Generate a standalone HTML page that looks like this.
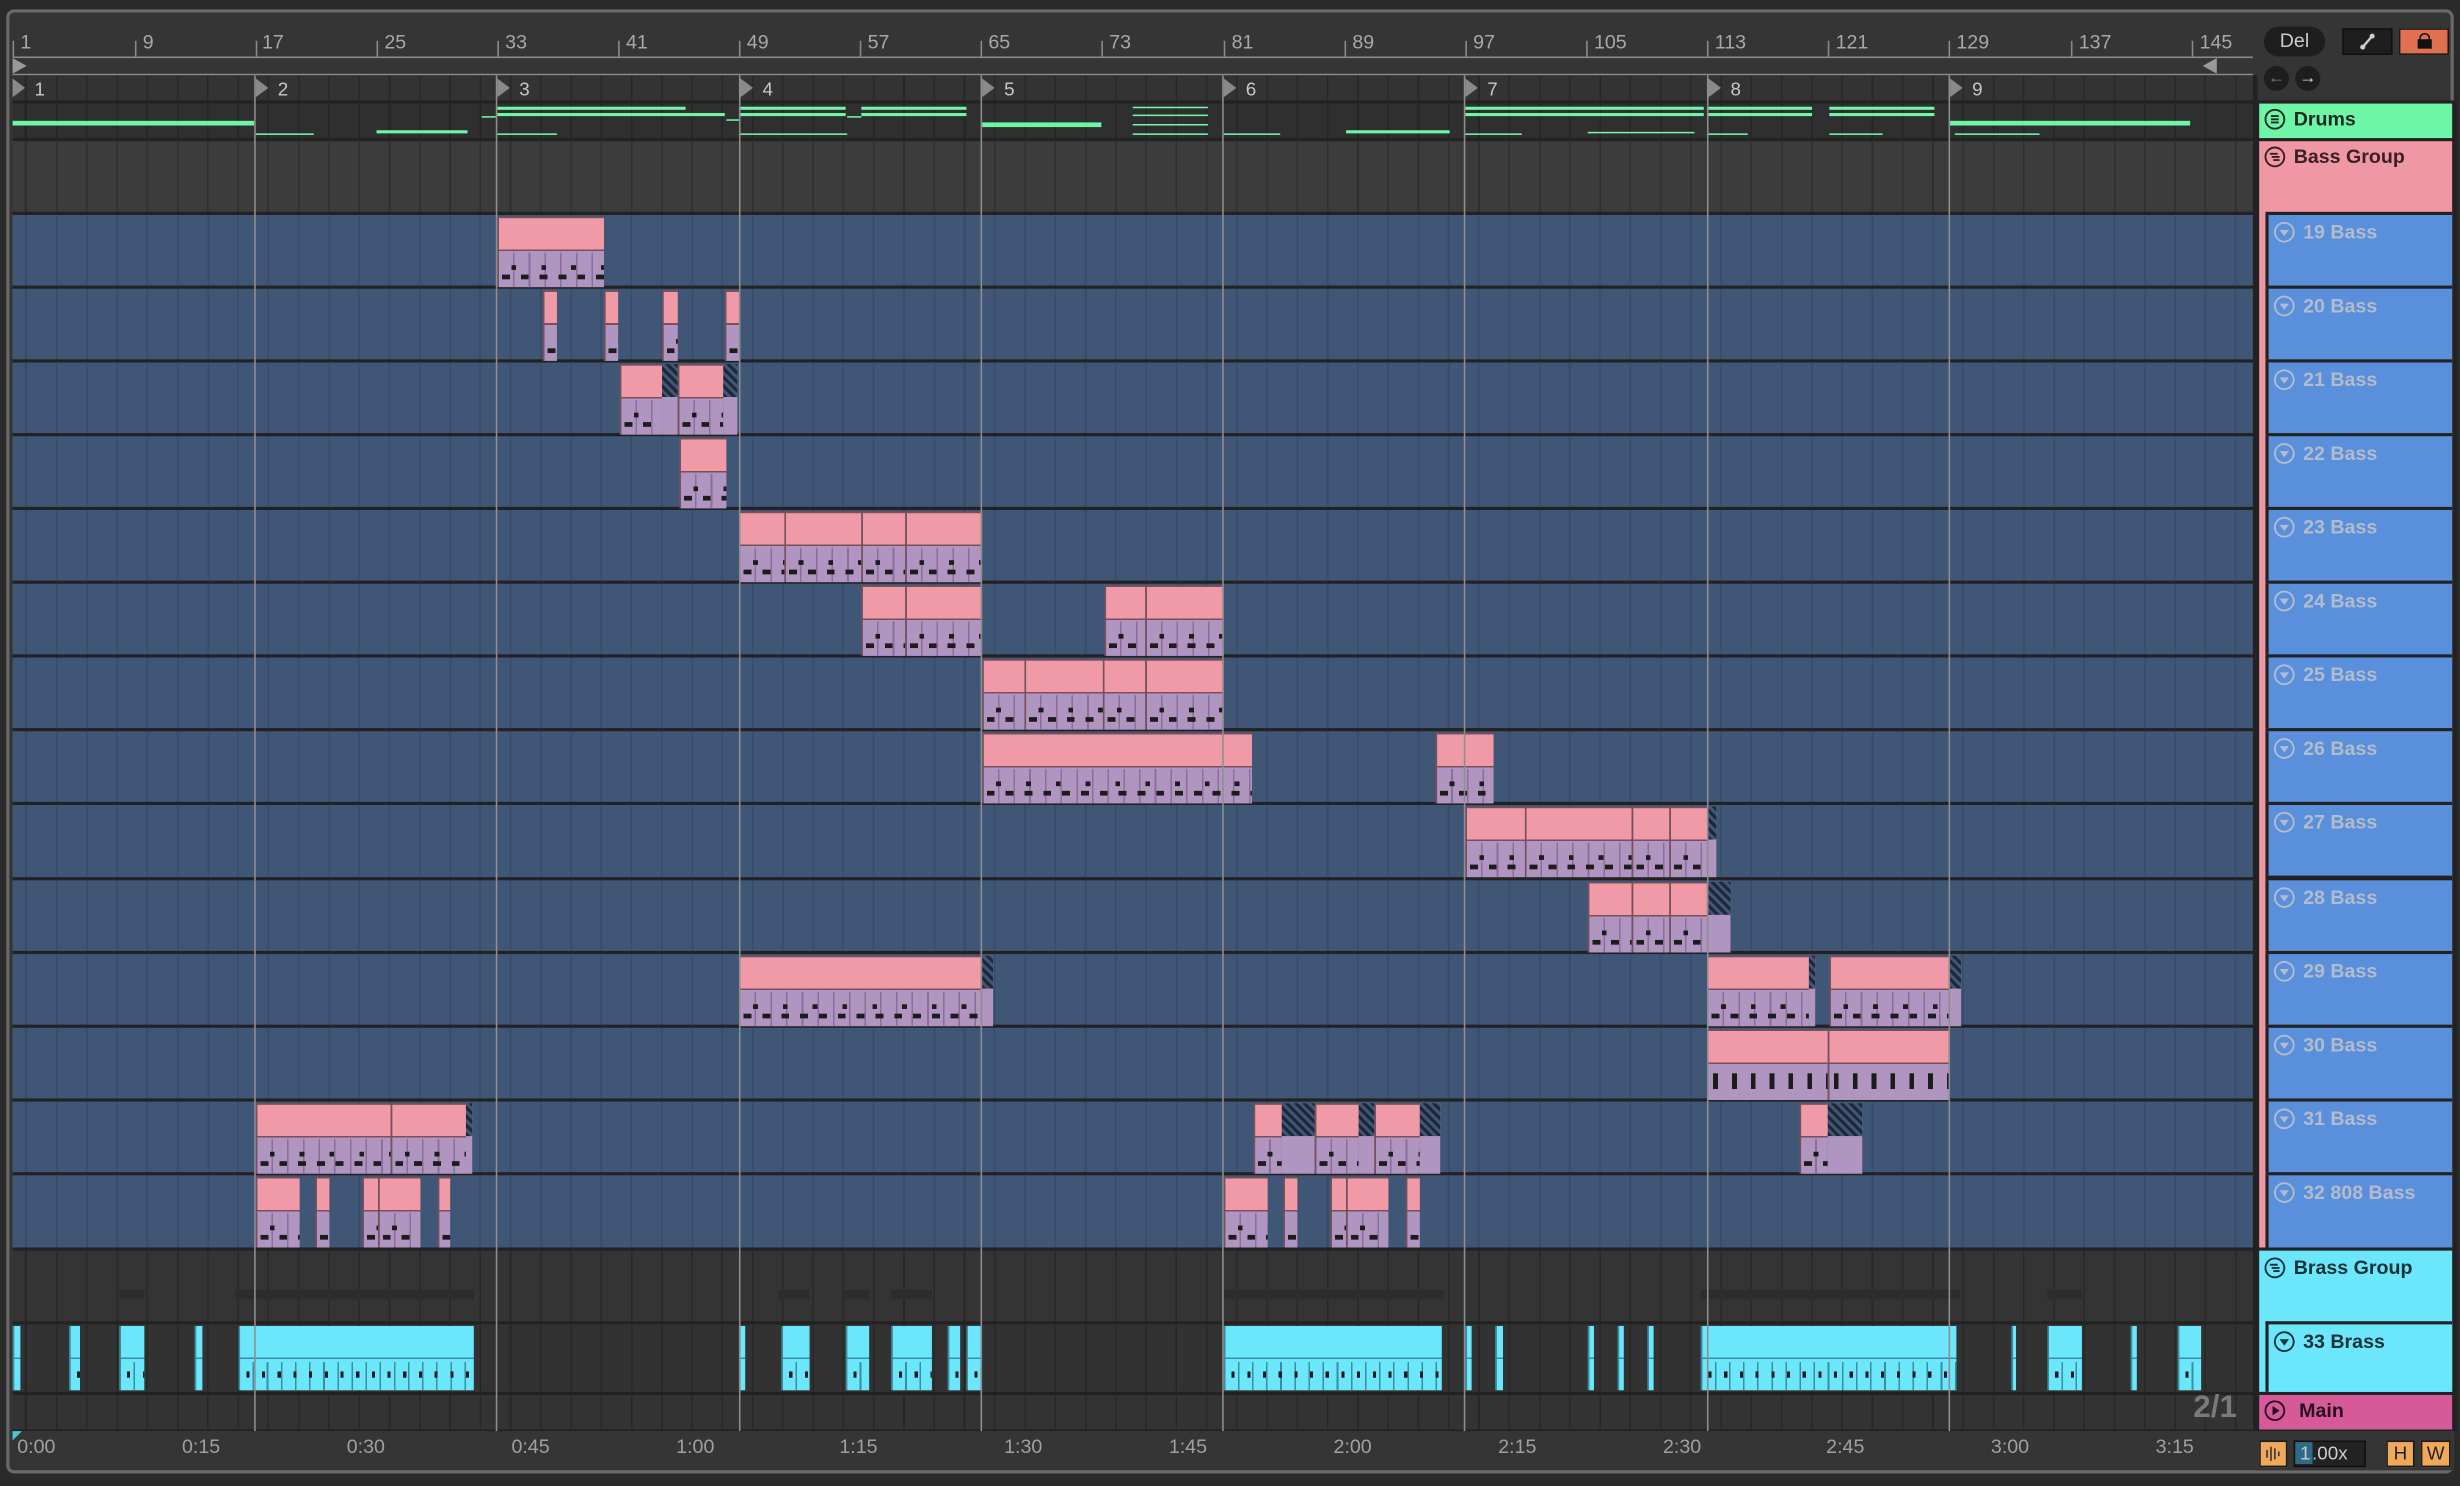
<!DOCTYPE html>
<html><head><meta charset="utf-8">
<style>
html,body{margin:0;padding:0;background:#2a2a2a;overflow:hidden;width:2460px;height:1486px}
#s{position:absolute;left:0;top:0;width:1568px;height:947px;transform:scale(1.56888,1.56917);transform-origin:0 0;font-family:"Liberation Sans",sans-serif}
.a{position:absolute}
.frame{left:4px;top:6px;width:1560px;height:933px;border:2px solid #6a6a6a;border-radius:5px;background:#353535;box-sizing:border-box}
.rl{position:absolute;top:20px;color:#a8a8a8;font-size:12.5px}
.tk{position:absolute;width:1px;background:#8a8a8a}
.grid{background-image:repeating-linear-gradient(90deg,rgba(0,0,0,.22) 0 1px,transparent 1px 19.29px);background-position:8.3px 0}
.row{position:absolute;left:8px;width:1428px}
.blue{background-color:#3f5677}
.sep{position:absolute;left:8px;width:1430px;height:2px;background:#222}
.scl{position:absolute;top:48px;width:1px;height:864px;background:#8e8e8e}
.c{position:absolute;height:45px;box-sizing:border-box;border-left:1px solid #7a4f5b;border-top:1px solid #7a4f5b;
background:
repeating-linear-gradient(90deg,transparent 0 2px,#1c1c1c 2px 7px,transparent 7px 12px) 0 36px/100% 3px no-repeat,
repeating-linear-gradient(90deg,transparent 0 8px,#1c1c1c 8px 11px,transparent 11px 19px) 0 30px/100% 3px no-repeat,
repeating-linear-gradient(90deg,transparent 0 9px,#8a6f9a 9px 10px) 0 22px/100% 23px no-repeat,
linear-gradient(#ef9aa6 0 20px,#7a4f5b 20px 21px,#b095c1 21px)}
.h{position:absolute;height:45px;box-sizing:border-box;
background:repeating-linear-gradient(45deg,#1d2736 0 2px,#3f5677 2px 4px) 0 0/100% 21px no-repeat,#b095c1}
.b{position:absolute;top:845px;height:41px;box-sizing:border-box;border-left:1px solid #3a8ea0;
background:
repeating-linear-gradient(90deg,transparent 0 4px,#1c1c1c 4px 6px,transparent 6px 10px) 0 29px/100% 4px no-repeat,
repeating-linear-gradient(90deg,transparent 0 8px,#3a8ea0 8px 9px) 0 23px/100% 18px no-repeat,
linear-gradient(#6be6fb 0 20px,#3a8ea0 20px 21px,#6be6fb 21px)}
.g{position:absolute;height:2px;background:#6ef5a5}
.sc{position:absolute;top:50px;color:#c8c8c8;font-size:12px}
.tri{position:absolute;top:50px;width:0;height:0;border-top:6px solid transparent;border-bottom:6px solid transparent;border-left:8px solid #8a8a8a}
.hd{position:absolute;box-sizing:border-box;font-weight:bold;font-size:12.5px}
svg.i{width:14px;height:14px;vertical-align:-3px;margin-right:5px}
.bh{position:absolute;left:1444px;width:119px;height:45px;background:#5a8fdc;border-left:2px solid #222;box-sizing:border-box;color:#b3bccb;padding:4px 0 0 3px;font-weight:bold;font-size:12.5px}
.tl{position:absolute;top:915px;color:#a0a0a0;font-size:12.5px}
</style></head><body><div id="s">
<div class="a frame"></div>
<div class="a" style="left:8px;top:36px;width:1428px;height:1px;background:#8a8a8a"></div>
<div class="a" style="left:8px;top:47px;width:1428px;height:1px;background:#8a8a8a"></div>
<div class="a" style="left:8px;top:37px;width:0;height:0;border-top:5px solid transparent;border-bottom:5px solid transparent;border-left:9px solid #999"></div>
<div class="a" style="left:1404px;top:37px;width:0;height:0;border-top:5px solid transparent;border-bottom:5px solid transparent;border-right:9px solid #999"></div>
<div class="rl" style="left:13px">1</div><div class="tk" style="left:8px;top:26px;height:10px"></div>
<div class="rl" style="left:91px">9</div><div class="tk" style="left:86px;top:26px;height:10px"></div>
<div class="rl" style="left:167px">17</div><div class="tk" style="left:163px;top:26px;height:10px"></div>
<div class="rl" style="left:245px">25</div><div class="tk" style="left:240px;top:26px;height:10px"></div>
<div class="rl" style="left:322px">33</div><div class="tk" style="left:317px;top:26px;height:10px"></div>
<div class="rl" style="left:399px">41</div><div class="tk" style="left:394px;top:26px;height:10px"></div>
<div class="rl" style="left:476px">49</div><div class="tk" style="left:471px;top:26px;height:10px"></div>
<div class="rl" style="left:553px">57</div><div class="tk" style="left:548px;top:26px;height:10px"></div>
<div class="rl" style="left:630px">65</div><div class="tk" style="left:625px;top:26px;height:10px"></div>
<div class="rl" style="left:707px">73</div><div class="tk" style="left:702px;top:26px;height:10px"></div>
<div class="rl" style="left:785px">81</div><div class="tk" style="left:780px;top:26px;height:10px"></div>
<div class="rl" style="left:862px">89</div><div class="tk" style="left:857px;top:26px;height:10px"></div>
<div class="rl" style="left:939px">97</div><div class="tk" style="left:934px;top:26px;height:10px"></div>
<div class="rl" style="left:1016px">105</div><div class="tk" style="left:1011px;top:26px;height:10px"></div>
<div class="rl" style="left:1093px">113</div><div class="tk" style="left:1088px;top:26px;height:10px"></div>
<div class="rl" style="left:1170px">121</div><div class="tk" style="left:1165px;top:26px;height:10px"></div>
<div class="rl" style="left:1247px">129</div><div class="tk" style="left:1242px;top:26px;height:10px"></div>
<div class="rl" style="left:1325px">137</div><div class="tk" style="left:1320px;top:26px;height:10px"></div>
<div class="rl" style="left:1402px">145</div><div class="tk" style="left:1397px;top:26px;height:10px"></div>

<div class="row grid" style="top:48px;height:16px;background-color:#333"></div>
<div class="sep" style="top:64px"></div>
<div class="row grid" style="top:66px;height:22px;background-color:#2f2f2f"></div>
<div class="sep" style="top:88px"></div>
<div class="row grid" style="top:90px;height:45px;background-color:#3c3c3c"></div>
<div class="row grid blue" style="top:137px;height:658px;background-image:repeating-linear-gradient(90deg,rgba(0,0,0,.12) 0 1px,transparent 1px 19.29px)"></div>
<div class="sep" style="top:135px"></div><div class="sep" style="top:182px"></div><div class="sep" style="top:229px"></div><div class="sep" style="top:276px"></div><div class="sep" style="top:323px"></div><div class="sep" style="top:370px"></div><div class="sep" style="top:417px"></div><div class="sep" style="top:464px"></div><div class="sep" style="top:511px"></div><div class="sep" style="top:559px"></div><div class="sep" style="top:606px"></div><div class="sep" style="top:653px"></div><div class="sep" style="top:700px"></div><div class="sep" style="top:747px"></div>
<div class="sep" style="top:795px"></div>
<div class="row grid" style="top:797px;height:45px;background-color:#343434"></div>
<div class="sep" style="top:842px"></div>
<div class="row grid" style="top:844px;height:43px;background-color:#323232"></div>
<div class="sep" style="top:887px"></div>
<div class="row grid" style="top:889px;height:22px;background-color:#333"></div>
<div class="sep" style="top:911px;height:1px"></div>
<div class="a" style="left:1436px;top:48px;width:3px;height:864px;background:#222"></div>
<div class="a" style="left:150px;top:822px;width:152px;height:6px;background:#2c2c2c"></div>
<div class="a" style="left:780px;top:822px;width:140px;height:6px;background:#2c2c2c"></div>
<div class="a" style="left:1084px;top:822px;width:165px;height:6px;background:#2c2c2c"></div>
<div class="a" style="left:496px;top:822px;width:20px;height:6px;background:#2c2c2c"></div>
<div class="a" style="left:538px;top:822px;width:16px;height:6px;background:#2c2c2c"></div>
<div class="a" style="left:568px;top:822px;width:26px;height:6px;background:#2c2c2c"></div>
<div class="a" style="left:76px;top:822px;width:16px;height:6px;background:#2c2c2c"></div>
<div class="a" style="left:1305px;top:822px;width:22px;height:6px;background:#2c2c2c"></div>

<div class="g" style="left:8px;top:77px;width:154px;height:3px"></div>
<div class="g" style="left:163px;top:85px;width:37px;height:1px"></div>
<div class="g" style="left:240px;top:83px;width:58px"></div>
<div class="g" style="left:307px;top:74px;width:9px;height:1px"></div>
<div class="g" style="left:317px;top:68px;width:120px"></div>
<div class="g" style="left:317px;top:72px;width:145px"></div>
<div class="g" style="left:317px;top:85px;width:38px;height:1px"></div>
<div class="g" style="left:463px;top:76px;width:8px;height:1px"></div>
<div class="g" style="left:471px;top:68px;width:68px"></div>
<div class="g" style="left:471px;top:72px;width:68px"></div>
<div class="g" style="left:471px;top:85px;width:69px;height:1px"></div>
<div class="g" style="left:540px;top:74px;width:9px;height:1px"></div>
<div class="g" style="left:549px;top:68px;width:67px"></div>
<div class="g" style="left:549px;top:72px;width:67px"></div>
<div class="g" style="left:626px;top:78px;width:76px;height:3px"></div>
<div class="g" style="left:722px;top:68px;width:48px;height:1px"></div>
<div class="g" style="left:722px;top:73px;width:48px;height:1px"></div>
<div class="g" style="left:722px;top:79px;width:48px;height:1px"></div>
<div class="g" style="left:722px;top:85px;width:48px;height:1px"></div>
<div class="g" style="left:780px;top:85px;width:36px;height:1px"></div>
<div class="g" style="left:858px;top:83px;width:66px"></div>
<div class="g" style="left:934px;top:68px;width:152px"></div>
<div class="g" style="left:934px;top:72px;width:152px"></div>
<div class="g" style="left:934px;top:85px;width:36px;height:1px"></div>
<div class="g" style="left:1012px;top:84px;width:68px;height:1px"></div>
<div class="g" style="left:1088px;top:68px;width:67px"></div>
<div class="g" style="left:1088px;top:72px;width:67px"></div>
<div class="g" style="left:1088px;top:85px;width:26px;height:1px"></div>
<div class="g" style="left:1166px;top:68px;width:67px"></div>
<div class="g" style="left:1166px;top:72px;width:67px"></div>
<div class="g" style="left:1166px;top:85px;width:34px;height:1px"></div>
<div class="g" style="left:1242px;top:77px;width:154px;height:3px"></div>
<div class="g" style="left:1246px;top:85px;width:54px;height:1px"></div>

<div class="c" style="left:317px;top:138px;width:68px"></div>
<div class="c" style="left:346px;top:185px;width:9px"></div><div class="c" style="left:385px;top:185px;width:9px"></div><div class="c" style="left:422px;top:185px;width:10px"></div><div class="c" style="left:462px;top:185px;width:9px"></div>
<div class="c" style="left:395px;top:232px;width:27px"></div><div class="h" style="left:422px;top:232px;width:10px"></div><div class="c" style="left:432px;top:232px;width:29px"></div><div class="h" style="left:461px;top:232px;width:9px"></div>
<div class="c" style="left:433px;top:279px;width:30px"></div>
<div class="c" style="left:471px;top:326px;width:29px"></div><div class="c" style="left:500px;top:326px;width:49px"></div><div class="c" style="left:549px;top:326px;width:28px"></div><div class="c" style="left:577px;top:326px;width:49px"></div>
<div class="c" style="left:549px;top:373px;width:28px"></div><div class="c" style="left:577px;top:373px;width:49px"></div><div class="c" style="left:704px;top:373px;width:26px"></div><div class="c" style="left:730px;top:373px;width:50px"></div>
<div class="c" style="left:626px;top:420px;width:27px"></div><div class="c" style="left:653px;top:420px;width:50px"></div><div class="c" style="left:703px;top:420px;width:27px"></div><div class="c" style="left:730px;top:420px;width:50px"></div>
<div class="c" style="left:626px;top:467px;width:172px"></div><div class="c" style="left:915px;top:467px;width:37px"></div>
<div class="c" style="left:934px;top:514px;width:38px"></div><div class="c" style="left:972px;top:514px;width:68px"></div><div class="c" style="left:1040px;top:514px;width:24px"></div><div class="c" style="left:1064px;top:514px;width:25px"></div><div class="h" style="left:1089px;top:514px;width:5px"></div>
<div class="c" style="left:1012px;top:562px;width:28px"></div><div class="c" style="left:1040px;top:562px;width:24px"></div><div class="c" style="left:1064px;top:562px;width:24px"></div><div class="h" style="left:1088px;top:562px;width:15px"></div>
<div class="c" style="left:471px;top:609px;width:155px"></div><div class="h" style="left:626px;top:609px;width:7px"></div><div class="c" style="left:1088px;top:609px;width:65px"></div><div class="h" style="left:1153px;top:609px;width:4px"></div><div class="c" style="left:1166px;top:609px;width:76px"></div><div class="h" style="left:1242px;top:609px;width:8px"></div>
<div class="c" style="left:1088px;top:656px;width:77px;background:repeating-linear-gradient(90deg,transparent 0 3px,#1c1c1c 3px 6px,transparent 6px 12px) 0 27px/100% 10px no-repeat,linear-gradient(#ef9aa6 0 20px,#7a4f5b 20px 21px,#b095c1 21px)"></div>
<div class="c" style="left:1165px;top:656px;width:77px;background:repeating-linear-gradient(90deg,transparent 0 3px,#1c1c1c 3px 6px,transparent 6px 12px) 0 27px/100% 10px no-repeat,linear-gradient(#ef9aa6 0 20px,#7a4f5b 20px 21px,#b095c1 21px)"></div>
<div class="c" style="left:163px;top:703px;width:86px"></div><div class="c" style="left:249px;top:703px;width:48px"></div><div class="h" style="left:297px;top:703px;width:4px"></div>
<div class="c" style="left:799px;top:703px;width:18px"></div><div class="h" style="left:817px;top:703px;width:21px"></div><div class="c" style="left:838px;top:703px;width:28px"></div><div class="h" style="left:866px;top:703px;width:10px"></div><div class="c" style="left:876px;top:703px;width:29px"></div><div class="h" style="left:905px;top:703px;width:13px"></div>
<div class="c" style="left:1147px;top:703px;width:18px"></div><div class="h" style="left:1165px;top:703px;width:22px"></div>
<div class="c" style="left:163px;top:750px;width:28px"></div><div class="c" style="left:201px;top:750px;width:9px"></div><div class="c" style="left:231px;top:750px;width:10px"></div><div class="c" style="left:241px;top:750px;width:27px"></div><div class="c" style="left:279px;top:750px;width:8px"></div>
<div class="c" style="left:780px;top:750px;width:28px"></div><div class="c" style="left:818px;top:750px;width:9px"></div><div class="c" style="left:848px;top:750px;width:10px"></div><div class="c" style="left:858px;top:750px;width:27px"></div><div class="c" style="left:896px;top:750px;width:9px"></div>

<div class="b" style="left:8px;width:5px"></div><div class="b" style="left:44px;width:7px"></div><div class="b" style="left:76px;width:16px"></div><div class="b" style="left:124px;width:5px"></div><div class="b" style="left:152px;width:150px"></div>
<div class="b" style="left:471px;width:4px"></div><div class="b" style="left:498px;width:18px"></div><div class="b" style="left:539px;width:15px"></div><div class="b" style="left:568px;width:26px"></div><div class="b" style="left:604px;width:8px"></div><div class="b" style="left:616px;width:9px"></div>
<div class="b" style="left:780px;width:139px"></div><div class="b" style="left:934px;width:4px"></div><div class="b" style="left:953px;width:5px"></div><div class="b" style="left:1012px;width:4px"></div><div class="b" style="left:1031px;width:4px"></div><div class="b" style="left:1050px;width:4px"></div>
<div class="b" style="left:1084px;width:163px"></div><div class="b" style="left:1282px;width:3px"></div><div class="b" style="left:1305px;width:22px"></div><div class="b" style="left:1358px;width:4px"></div><div class="b" style="left:1388px;width:15px"></div>

<div class="scl" style="left:162px"></div><div class="scl" style="left:316px"></div><div class="scl" style="left:471px"></div><div class="scl" style="left:625px"></div><div class="scl" style="left:779px"></div><div class="scl" style="left:933px"></div><div class="scl" style="left:1088px"></div><div class="scl" style="left:1242px"></div>
<div class="tri" style="left:8px"></div><div class="sc" style="left:22px">1</div>
<div class="tri" style="left:163px"></div><div class="sc" style="left:177px">2</div>
<div class="tri" style="left:317px"></div><div class="sc" style="left:331px">3</div>
<div class="tri" style="left:472px"></div><div class="sc" style="left:486px">4</div>
<div class="tri" style="left:626px"></div><div class="sc" style="left:640px">5</div>
<div class="tri" style="left:780px"></div><div class="sc" style="left:794px">6</div>
<div class="tri" style="left:934px"></div><div class="sc" style="left:948px">7</div>
<div class="tri" style="left:1089px"></div><div class="sc" style="left:1103px">8</div>
<div class="tri" style="left:1243px"></div><div class="sc" style="left:1257px">9</div>

<div class="a" style="left:8px;top:912px;width:1428px;height:24px;background:#353535"></div>
<div class="tl" style="left:11px">0:00</div><div class="tl" style="left:116px">0:15</div><div class="tl" style="left:221px">0:30</div><div class="tl" style="left:326px">0:45</div><div class="tl" style="left:431px">1:00</div><div class="tl" style="left:535px">1:15</div><div class="tl" style="left:640px">1:30</div><div class="tl" style="left:745px">1:45</div><div class="tl" style="left:850px">2:00</div><div class="tl" style="left:955px">2:15</div><div class="tl" style="left:1060px">2:30</div><div class="tl" style="left:1164px">2:45</div><div class="tl" style="left:1269px">3:00</div><div class="tl" style="left:1374px">3:15</div>
<div class="a" style="left:8px;top:912px;width:0;height:0;border-left:6px solid #4ac8d8;border-bottom:6px solid transparent"></div>

<div class="a" style="left:1443px;top:17px;width:39px;height:19px;border-radius:10px;background:#1e1e1e;color:#ccc;font-size:12.5px;text-align:center;line-height:19px">Del</div>
<div class="a" style="left:1493px;top:18px;width:32px;height:17px;background:#1e1e1e;border:1px solid #111;box-sizing:border-box"><svg width="30" height="15" style="position:absolute;left:0;top:0"><line x1="12" y1="11" x2="18" y2="4" stroke="#ccc" stroke-width="1.5"/><circle cx="12" cy="11" r="1.6" fill="#ccc"/><circle cx="18" cy="4" r="1.6" fill="#ccc"/></svg></div>
<div class="a" style="left:1529px;top:18px;width:32px;height:17px;background:#e07050;border:1px solid #1a1a1a;box-sizing:border-box"><div class="a" style="left:11px;top:6px;width:9px;height:6px;background:#111"></div><div class="a" style="left:12px;top:2px;width:5px;height:5px;border:1.5px solid #111;border-bottom:none;border-radius:4px 4px 0 0"></div></div>
<div class="a" style="left:1443px;top:42px;width:16px;height:16px;border-radius:50%;background:#1e1e1e;color:#777;font-size:11px;text-align:center;line-height:16px">←</div>
<div class="a" style="left:1463px;top:42px;width:16px;height:16px;border-radius:50%;background:#1e1e1e;color:#ddd;font-size:11px;text-align:center;line-height:16px">→</div>

<div class="a" style="left:1438px;top:64px;width:128px;height:848px;background:#222"></div>
<div class="hd" style="left:1440px;top:66px;width:123px;height:22px;background:#6ff5a8;color:#1e2b22;padding:3px 0 0 3px"><svg class="i" viewBox="0 0 14 14"><circle cx="7" cy="7" r="6" fill="none" stroke="#1e2b22" stroke-width="1.2"/><path d="M4.5 5h5M4.5 7h5M4.5 9h5" stroke="#1e2b22" stroke-width="1.2"/></svg>Drums</div>
<div class="hd" style="left:1440px;top:90px;width:123px;height:705px;background:#ef98a3;color:#3a1f25;padding:3px 0 0 3px"><svg class="i" viewBox="0 0 14 14"><circle cx="7" cy="7" r="6" fill="none" stroke="#3a1f25" stroke-width="1.2"/><path d="M3.8 5h5M5 7h5M6 9h4" stroke="#3a1f25" stroke-width="1.2"/></svg>Bass Group</div>
<div class="a" style="left:1444px;top:135px;width:119px;height:660px;background:#222"></div>
<div class="bh" style="top:137px"><svg class="i" viewBox="0 0 14 14"><circle cx="7" cy="7" r="6" fill="none" stroke="#b3bccb" stroke-width="1.2"/><path d="M4 5.5h6l-3 4z" fill="#b3bccb"/></svg>19 Bass</div>
<div class="bh" style="top:184px"><svg class="i" viewBox="0 0 14 14"><circle cx="7" cy="7" r="6" fill="none" stroke="#b3bccb" stroke-width="1.2"/><path d="M4 5.5h6l-3 4z" fill="#b3bccb"/></svg>20 Bass</div>
<div class="bh" style="top:231px"><svg class="i" viewBox="0 0 14 14"><circle cx="7" cy="7" r="6" fill="none" stroke="#b3bccb" stroke-width="1.2"/><path d="M4 5.5h6l-3 4z" fill="#b3bccb"/></svg>21 Bass</div>
<div class="bh" style="top:278px"><svg class="i" viewBox="0 0 14 14"><circle cx="7" cy="7" r="6" fill="none" stroke="#b3bccb" stroke-width="1.2"/><path d="M4 5.5h6l-3 4z" fill="#b3bccb"/></svg>22 Bass</div>
<div class="bh" style="top:325px"><svg class="i" viewBox="0 0 14 14"><circle cx="7" cy="7" r="6" fill="none" stroke="#b3bccb" stroke-width="1.2"/><path d="M4 5.5h6l-3 4z" fill="#b3bccb"/></svg>23 Bass</div>
<div class="bh" style="top:372px"><svg class="i" viewBox="0 0 14 14"><circle cx="7" cy="7" r="6" fill="none" stroke="#b3bccb" stroke-width="1.2"/><path d="M4 5.5h6l-3 4z" fill="#b3bccb"/></svg>24 Bass</div>
<div class="bh" style="top:419px"><svg class="i" viewBox="0 0 14 14"><circle cx="7" cy="7" r="6" fill="none" stroke="#b3bccb" stroke-width="1.2"/><path d="M4 5.5h6l-3 4z" fill="#b3bccb"/></svg>25 Bass</div>
<div class="bh" style="top:466px"><svg class="i" viewBox="0 0 14 14"><circle cx="7" cy="7" r="6" fill="none" stroke="#b3bccb" stroke-width="1.2"/><path d="M4 5.5h6l-3 4z" fill="#b3bccb"/></svg>26 Bass</div>
<div class="bh" style="top:513px"><svg class="i" viewBox="0 0 14 14"><circle cx="7" cy="7" r="6" fill="none" stroke="#b3bccb" stroke-width="1.2"/><path d="M4 5.5h6l-3 4z" fill="#b3bccb"/></svg>27 Bass</div>
<div class="bh" style="top:561px"><svg class="i" viewBox="0 0 14 14"><circle cx="7" cy="7" r="6" fill="none" stroke="#b3bccb" stroke-width="1.2"/><path d="M4 5.5h6l-3 4z" fill="#b3bccb"/></svg>28 Bass</div>
<div class="bh" style="top:608px"><svg class="i" viewBox="0 0 14 14"><circle cx="7" cy="7" r="6" fill="none" stroke="#b3bccb" stroke-width="1.2"/><path d="M4 5.5h6l-3 4z" fill="#b3bccb"/></svg>29 Bass</div>
<div class="bh" style="top:655px"><svg class="i" viewBox="0 0 14 14"><circle cx="7" cy="7" r="6" fill="none" stroke="#b3bccb" stroke-width="1.2"/><path d="M4 5.5h6l-3 4z" fill="#b3bccb"/></svg>30 Bass</div>
<div class="bh" style="top:702px"><svg class="i" viewBox="0 0 14 14"><circle cx="7" cy="7" r="6" fill="none" stroke="#b3bccb" stroke-width="1.2"/><path d="M4 5.5h6l-3 4z" fill="#b3bccb"/></svg>31 Bass</div>
<div class="bh" style="top:749px;height:46px"><svg class="i" viewBox="0 0 14 14"><circle cx="7" cy="7" r="6" fill="none" stroke="#b3bccb" stroke-width="1.2"/><path d="M4 5.5h6l-3 4z" fill="#b3bccb"/></svg>32 808 Bass</div>
<div class="hd" style="left:1440px;top:797px;width:123px;height:90px;background:#6be6fb;color:#163238;padding:4px 0 0 3px"><svg class="i" viewBox="0 0 14 14"><circle cx="7" cy="7" r="6" fill="none" stroke="#163238" stroke-width="1.2"/><path d="M3.8 5h5M5 7h5M6 9h4" stroke="#163238" stroke-width="1.2"/></svg>Brass Group</div>
<div class="hd" style="left:1444px;top:842px;width:119px;height:45px;background:#6be6fb;color:#163238;border-left:2px solid #222;border-top:2px solid #222;padding:4px 0 0 3px"><svg class="i" viewBox="0 0 14 14"><circle cx="7" cy="7" r="6" fill="none" stroke="#163238" stroke-width="1.2"/><path d="M4 5.5h6l-3 4z" fill="#163238"/></svg>33 Brass</div>
<div class="hd" style="left:1440px;top:889px;width:123px;height:22px;background:#d65a9a;color:#2a0f1e;padding:3px 0 0 3px"><svg class="i" viewBox="0 0 14 14"><circle cx="7" cy="7" r="6" fill="none" stroke="#2a0f1e" stroke-width="1.2"/><path d="M5.5 4v6l4.5-3z" fill="#2a0f1e"/></svg>&nbsp;Main</div>
<div class="a" style="left:1398px;top:886px;color:#7a7a7a;font-size:20px;font-weight:bold">2/1</div>

<div class="a" style="left:1438px;top:912px;width:126px;height:25px;background:#353535"></div>
<div class="a" style="left:1440px;top:918px;width:18px;height:17px;background:#f0a95a;border:1px solid #1a1a1a;box-sizing:border-box"><svg width="16" height="15" style="position:absolute;left:0;top:0"><path d="M4 5v5M6.5 3v9M9 4v7M11.5 6v3" stroke="#333" stroke-width="1"/></svg></div>
<div class="a" style="left:1462px;top:918px;width:46px;height:17px;background:#222;border:1px solid #111;box-sizing:border-box;color:#ccc;font-size:12px;line-height:15px"><span style="background:#2f6a88;padding:0 1px 0 3px">1</span>.00x</div>
<div class="a" style="left:1521px;top:918px;width:18px;height:17px;background:#f0a95a;border:1px solid #1a1a1a;box-sizing:border-box;color:#222;font-size:12px;text-align:center;line-height:15px">H</div>
<div class="a" style="left:1543px;top:918px;width:19px;height:17px;background:#f0a95a;border:1px solid #1a1a1a;box-sizing:border-box;color:#222;font-size:12px;text-align:center;line-height:15px">W</div>
</div></body></html>
